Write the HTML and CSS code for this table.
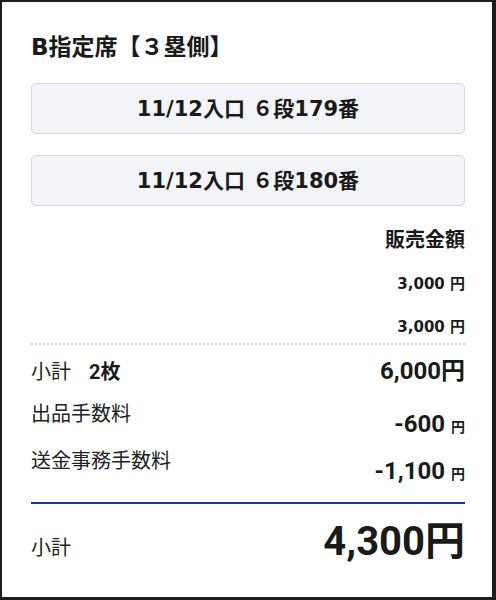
FILE: index.html
```html
<!DOCTYPE html>
<html lang="ja">
<head>
<meta charset="utf-8">
<link rel="stylesheet" href="styles.css">
</head>
<body>
<div class="card">
  <h1 class="title">B指定席【３塁側】</h1>
  <div class="seat">11/12入口 ６段179番</div>
  <div class="seat seat-next">11/12入口 ６段180番</div>
  <div class="prices">
    <div class="prices-head">販売金額</div>
    <div class="price">3,000 円</div>
    <div class="price price-next">3,000 円</div>
  </div>
  <div class="sub">
    <span class="label">小計<b class="count">2枚</b></span>
    <span class="amount">6,000円</span>
  </div>
  <div class="fee">
    <span class="label">出品手数料</span>
    <span class="amount fee-amount">-600<small class="yen">円</small></span>
  </div>
  <div class="fee fee-next">
    <span class="label">送金事務手数料</span>
    <span class="amount fee-amount">-1,100<small class="yen">円</small></span>
  </div>
  <div class="total">
    <span class="label">小計</span>
    <span class="total-amount">4,300円</span>
  </div>
</div>
</body>
</html>
```
FILE: styles.css
```css
html, body {
  margin: 0;
  padding: 0;
}
body {
  background: #1c1c1c;
  width: 496px;
  height: 600px;
  overflow: hidden;
}
.card {
  margin: 2px 4px 3px 2px;
  height: 595px;
  box-sizing: border-box;
  background: #fff;
  padding: 30px 27px 0 29px;
  color: #1a1a1a;
  font-family: "DejaVu Sans", "Noto Sans CJK JP", sans-serif;
}
.title {
  margin: 0;
  font-size: 23px;
  line-height: 30px;
  font-weight: bold;
}
.seat {
  margin-top: 21px;
  height: 51px;
  box-sizing: border-box;
  border: 1px solid #d6d6d9;
  border-radius: 5px;
  background: #f2f4f8;
  display: flex;
  align-items: center;
  justify-content: center;
  font-size: 21px;
  font-weight: bold;
  line-height: 28px;
}
.prices {
  text-align: right;
  padding-bottom: 6px;
  border-bottom: 2px dotted #d4d4d4;
}
.prices-head {
  margin-top: 20px;
  font-size: 20px;
  font-weight: bold;
  line-height: 28px;
}
.price {
  margin-top: 20px;
  font-size: 15px;
  font-weight: bold;
  line-height: 20px;
}
.price-next {
  margin-top: 23px;
}
.sub, .fee, .total {
  display: flex;
  justify-content: space-between;
}
.sub {
  margin-top: 12px;
  align-items: baseline;
}
.fee {
  margin-top: 13px;
  align-items: flex-start;
}
.fee-next {
  margin-top: 5px;
}
.label {
  font-family: "Noto Sans CJK JP", sans-serif;
  font-size: 20px;
  line-height: 28px;
  color: #222;
}
.count {
  font-family: Roboto, "Noto Sans CJK JP", sans-serif;
  font-weight: bold;
  margin-left: 18px;
  color: #1a1a1a;
}
.amount {
  font-family: Roboto, "Noto Sans CJK JP", sans-serif;
  font-weight: bold;
  font-size: 24px;
  line-height: 28px;
}
.fee-amount {
  margin-top: 11px;
}
.yen {
  font-size: 14px;
  margin-left: 6px;
}
.total {
  margin-top: 14px;
  border-top: 2px solid #1b3591;
  padding-top: 14px;
  align-items: baseline;
}
.total-amount {
  font-family: Roboto, "Noto Sans CJK JP", sans-serif;
  font-weight: bold;
  font-size: 40px;
  line-height: 48px;
}
```
